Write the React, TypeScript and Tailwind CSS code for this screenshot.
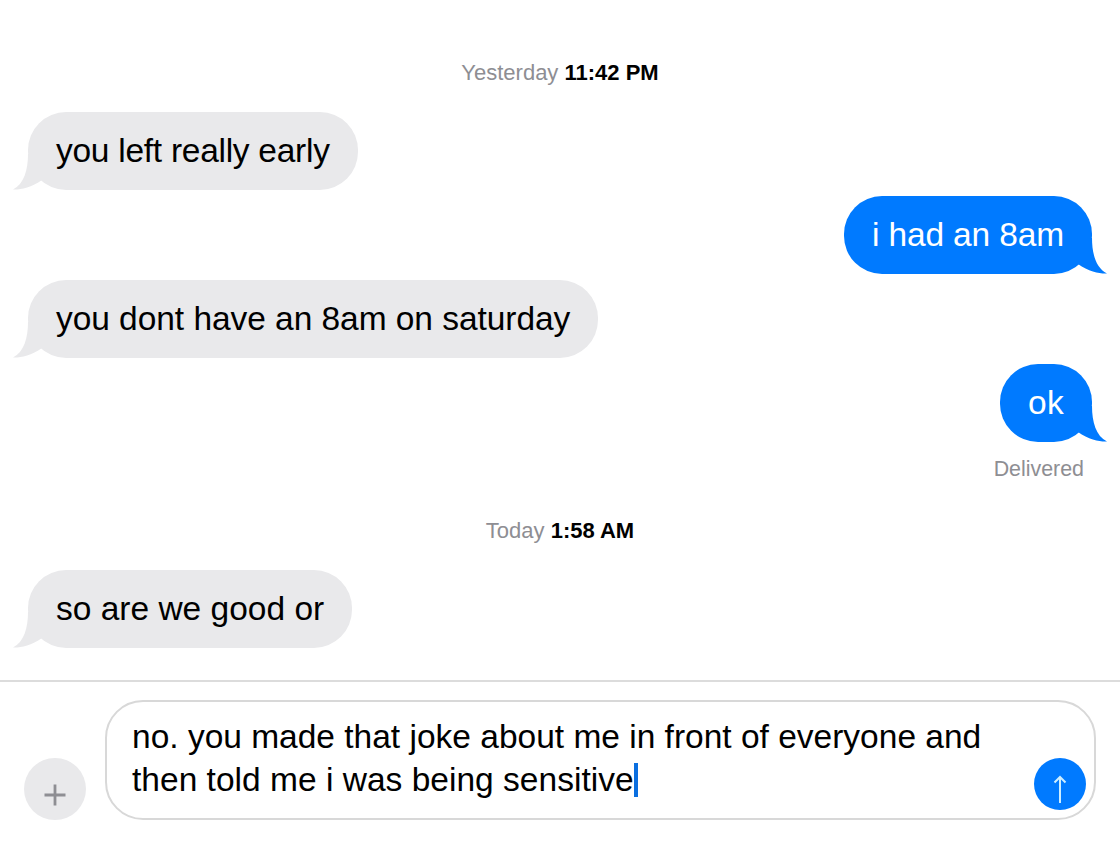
const font = { fontFamily: '"Liberation Sans", Arial, sans-serif' };

function Received({ text, fit }: { text: string; fit: string }) {
  return (
    <div className="flex justify-start pl-7">
      <div className={`relative h-[78px] rounded-[38px] bg-[#e9e9eb] px-7 flex items-center text-[33.5px] text-black ${fit}`}>
        <svg className="absolute left-[-15px] bottom-0" width="40" height="36" viewBox="0 0 40 36">
          <path d="M15 0 C15 16 11 30 0 35.500 C6 36 18 34 29 26 L29 0 Z" fill="#e9e9eb" />
        </svg>
        <span className="relative">{text}</span>
      </div>
    </div>
  );
}

function Sent({ text, fit }: { text: string; fit: string }) {
  return (
    <div className="flex justify-end pr-7">
      <div className={`relative h-[78px] rounded-[38px] bg-[#007aff] px-7 flex items-center text-[33.5px] text-white ${fit}`}>
        <svg className="absolute right-[-15px] bottom-0" width="40" height="36" viewBox="0 0 40 36">
          <path d="M25 0 C25 16 29 30 40 35.500 C34 36 22 34 11 26 L11 0 Z" fill="#007aff" />
        </svg>
        <span className="relative">{text}</span>
      </div>
    </div>
  );
}

function Stamp({ day, time }: { day: string; time: string }) {
  return (
    <div className="text-center text-[22px] leading-[26px] text-[#8e8e93]">
      {day} <span className="font-bold text-black">{time}</span>
    </div>
  );
}

export default function App() {
  return (
    <div className="w-[1120px] h-[852px] bg-white flex flex-col overflow-hidden" style={font}>
      <div className="h-[680px] pt-[60px] flex flex-col shrink-0">
        <Stamp day="Yesterday" time="11:42 PM" />
        <div className="mt-[26px] flex flex-col gap-1.5">
          <Received text="you left really early" fit="tracking-[-0.27px]" />
          <Sent text="i had an 8am" fit="tracking-[-0.14px]" />
          <Received text="you dont have an 8am on saturday" fit="tracking-[-0.05px]" />
          <Sent text="ok" fit="tracking-[0.3px]" />
        </div>
        <div className="mt-[15px] pr-[36px] text-right text-[21.400px] leading-[25px] text-[#8e8e93]">Delivered</div>
        <div className="mt-[36px]">
          <Stamp day="Today" time="1:58 AM" />
        </div>
        <div className="mt-[26px]">
          <Received text="so are we good or" fit="tracking-[0px]" />
        </div>
      </div>
      <div className="h-0.5 bg-[#dcdcdc] shrink-0" />
      <div className="flex items-end gap-[19px] pl-6 pt-[18px]">
        <div className="w-[62px] h-[62px] rounded-full bg-[#e9e9eb] flex items-center justify-center">
          <svg width="24" height="24" viewBox="0 0 24 24" className="mt-3">
            <path d="M12 1.500V22.500M1.500 12H22.500" stroke="#8e8e93" strokeWidth="2.800" fill="none" />
          </svg>
        </div>
        <div className="relative w-[991px] h-[120px] rounded-[38px] border-2 border-[#d8d8d8] bg-white pl-[25px] pt-[13px] text-[33.5px] leading-[43px] text-black">
          <div>no. you made that joke about me in front of everyone and</div>
          <div className="flex items-center tracking-[0.02px]">
            then told me i was being sensitive
            <span className="w-1 h-[34px] bg-[#0a6fe0]" />
          </div>
          <div className="absolute right-2 bottom-2 w-[52px] h-[52px] rounded-full bg-[#007aff] flex items-center justify-center">
            <svg width="20" height="30" viewBox="0 0 20 30" className="mt-3">
              <path d="M10 28V2M4.500 7.500L10 2L15.500 7.500" stroke="#cdeeff" strokeWidth="2" fill="none" />
            </svg>
          </div>
        </div>
      </div>
    </div>
  );
}
